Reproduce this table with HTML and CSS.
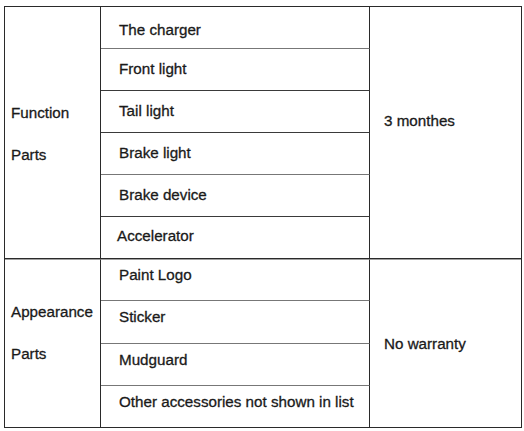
FILE: index.html
```html
<!DOCTYPE html>
<html>
<head>
<meta charset="utf-8">
<link rel="stylesheet" href="styles.css">
</head>
<body>
<div class="table">
  <div class="cat cat-func"><span>Function</span><span>Parts</span></div>
  <div class="item r1 line-gray">The charger</div>
  <div class="item r2">Front light</div>
  <div class="item r3">Tail light</div>
  <div class="item r4 line-gray">Brake light</div>
  <div class="item r5">Brake device</div>
  <div class="item r6 item-sec-end">Accelerator</div>
  <div class="term term-func">3 monthes</div>

  <div class="cat cat-app"><span>Appearance</span><span>Parts</span></div>
  <div class="item r7 up line-gray">Paint Logo</div>
  <div class="item r8 up line-gray">Sticker</div>
  <div class="item r9 up line-gray">Mudguard</div>
  <div class="item r10 up last">Other accessories not shown in list</div>
  <div class="term term-app">No warranty</div>
</div>
</body>
</html>
```
FILE: styles.css
```css
html, body {
  margin: 0;
  padding: 0;
  background: #fff;
}
body {
  font-family: "Liberation Sans", Arial, sans-serif;
  font-size: 15.2px;
  color: #1a1a1a;
  -webkit-text-stroke: 0.3px #1a1a1a;
}
.table {
  margin: 6px 0 0 4px;
  width: 518px;
  box-sizing: border-box;
  border: 1px solid #2a2a2a;
  display: grid;
  grid-template-columns: 96px 269px 151px;
  grid-template-rows: 42px 42px 42px 42px 42px 42px 42px 43px 42px 41px;
}
.cat {
  grid-column: 1;
  border-right: 1px solid #2a2a2a;
  display: flex;
  flex-direction: column;
  justify-content: center;
  padding-left: 6px;
  line-height: 42px;
}
.cat-func {
  grid-row: 1 / 7;
  border-bottom: 1px solid #2a2a2a;
  padding-top: 2px;
}
.cat-app {
  grid-row: 7 / 11;
  border-top: 1px solid #a0a0a0;
  padding-bottom: 21px;
}
.item {
  grid-column: 2;
  border-right: 1px solid #2a2a2a;
  border-bottom: 1px solid #3a3a3a;
  padding-left: 18px;
  display: flex;
  align-items: center;
  padding-bottom: 2px;
}
.item.line-gray { border-bottom-color: #777; }
.item.up { padding-bottom: 11px; }
.item.last { border-bottom: none; }
.r1 { grid-row: 1; padding-top: 3px; padding-bottom: 0; }
.r2 { grid-row: 2; }
.r3 { grid-row: 3; }
.r4 { grid-row: 4; }
.r5 { grid-row: 5; }
.r6 { grid-row: 6; padding-left: 16px; padding-bottom: 5px; border-bottom-color: #2a2a2a; }
.r7 { grid-row: 7; border-top: 1px solid #a0a0a0; padding-bottom: 9px; }
.r8 { grid-row: 8; padding-bottom: 9px; }
.r9 { grid-row: 9; }
.r10 { grid-row: 10; }
.term {
  grid-column: 3;
  padding-left: 14px;
  display: flex;
  align-items: center;
}
.term-func {
  grid-row: 1 / 7;
  border-bottom: 1px solid #2a2a2a;
  padding-bottom: 24px;
}
.term-app {
  grid-row: 7 / 11;
  border-top: 1px solid #a0a0a0;
  padding-bottom: 0;
}
```
